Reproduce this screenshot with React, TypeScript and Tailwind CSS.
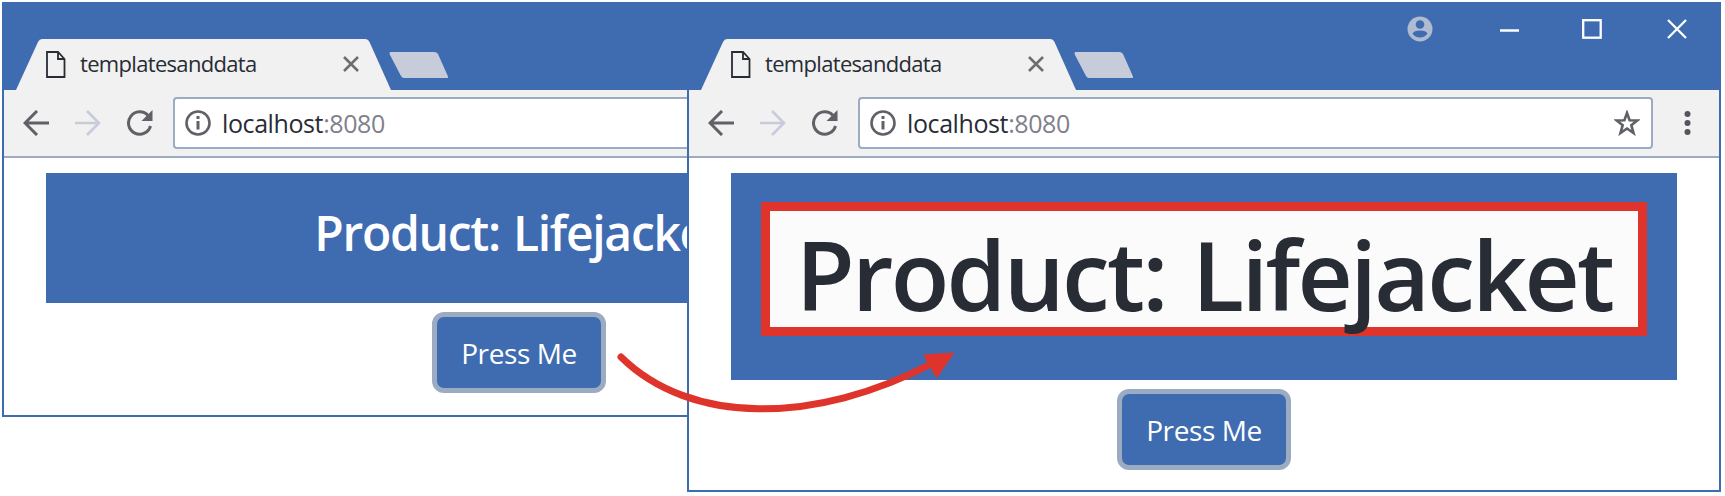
import type { ReactNode } from "react";

const Tab = () => (
  <div className="flex h-[88px] items-end">
    <div className="relative ml-3 h-[51px] w-[378px]">
      <svg className="absolute inset-0 overflow-visible" width="446" height="51" aria-hidden="true">
        <path d="M0 51 L22 3 Q23.500 0 26 0 H349 Q352 0 353.500 3 L375 51 Z" fill="#f1f1f1" />
        <path d="M374 13 H418 Q421 13 422 15 L432 37.500 Q432.500 39 431 39 H388 Q386 39 385 37 L373.500 15 Z" fill="#c6ccda" />
      </svg>
      <div className="relative flex h-full items-center pl-[30px]">
        <svg width="20" height="28" viewBox="0 0 20 28" fill="none" stroke="#282c35" strokeWidth="1.8" aria-hidden="true">
          <path d="M1 1 H12 L18.500 8 V26 H1 Z M12 1 V8 H18.500" />
        </svg>
        <span className="mb-[3px] ml-[14px] w-[190px] whitespace-nowrap text-[22px] leading-none tracking-[-0.68px] text-[#282c35]">
          templatesanddata
        </span>
        <svg className="mb-px ml-[73px]" width="16" height="16" viewBox="0 0 16 16" stroke="#6e6d74" strokeWidth="2.6" aria-hidden="true">
          <path d="M1 1 L15 15 M15 1 L1 15" />
        </svg>
      </div>
    </div>
  </div>
);

const WindowButtons = () => (
  <div className="ml-auto mr-[34px] mt-[11px] flex h-8 items-center" aria-hidden="true">
    <svg width="26" height="26" viewBox="0 0 26 26">
      <circle cx="13" cy="13" r="12.500" fill="#aebbd0" />
      <circle cx="13" cy="8.500" r="4.300" fill="#3f6cb1" />
      <path d="M5.500 17.500 Q7 14.500 13 14.500 Q19 14.500 20.500 17.500 Q18 21.500 13 21.500 Q8 21.500 5.500 17.500 Z" fill="#3f6cb1" />
    </svg>
    <svg className="ml-[66px]" width="22" height="22" stroke="#fff" strokeWidth="2.500">
      <path d="M1 12.500 H20" />
    </svg>
    <svg className="ml-[61px]" width="20" height="20" fill="none" stroke="#fff" strokeWidth="2.300">
      <rect x="1.200" y="1.200" width="17.500" height="17.500" />
    </svg>
    <svg className="ml-[65px]" width="20" height="20" stroke="#fff" strokeWidth="2.300">
      <path d="M1 1 L19 19 M19 1 L1 19" />
    </svg>
  </div>
);

const Toolbar = () => (
  <div className="flex h-[68px] items-start border-b-2 border-[#9babc1] bg-[#f1f1f1] pt-[7px]">
    <div className="flex h-[52px] items-center pl-[19px]">
      <svg width="26" height="26" viewBox="0 0 26 26" fill="none" stroke="#625f66" strokeWidth="3" aria-hidden="true">
        <path d="M26 13 H3 M14 1 L2 13 L14 25" />
      </svg>
      <svg className="ml-[26px]" width="26" height="26" viewBox="0 0 26 26" fill="none" stroke="#c6ccda" strokeWidth="2.600" aria-hidden="true">
        <path d="M0 13 H23 M12 1 L24 13 L12 25" />
      </svg>
      <svg className="ml-[25px]" width="27" height="26" viewBox="0 0 27 26" fill="none" stroke="#625f66" strokeWidth="3" aria-hidden="true">
        <path d="M22 5.500 A11.200 11.200 0 1 0 24.500 16" />
        <path d="M26.500 0 V11 H15.500 Z" fill="#625f66" stroke="none" />
      </svg>
    </div>
    <div className="ml-[20px] flex h-[52px] w-[795px] items-center rounded-[4px] border-2 border-[#9babc1] bg-white pl-[10px] pr-[11px]">
      <svg width="26" height="26" viewBox="0 0 26 26" fill="none" stroke="#625f66" strokeWidth="2.600" aria-hidden="true">
        <circle cx="13" cy="13" r="11.500" />
        <path d="M13 11 V19.500 M13 6 V9" strokeWidth="3" />
      </svg>
      <span className="ml-[11px] whitespace-nowrap text-[25px] leading-none tracking-[-0.4px] text-[#282c35]">
        localhost<span className="text-[#80808c]">:8080</span>
      </span>
      <svg className="ml-auto" width="26" height="26" viewBox="0 0 26 26" fill="none" stroke="#625f66" strokeWidth="2.600" aria-hidden="true">
        <path d="M13 3 L15.600 10.300 L23.300 10.500 L17.300 15.200 L19.500 23 L13 18.500 L6.500 23 L8.700 15.200 L2.700 10.500 L10.400 10.300 Z" />
      </svg>
    </div>
    <svg className="ml-[31px] mt-[13px]" width="7" height="26" fill="#55535b" aria-hidden="true">
      <circle cx="3.500" cy="4" r="3" />
      <circle cx="3.500" cy="13" r="3" />
      <circle cx="3.500" cy="22" r="3" />
    </svg>
  </div>
);

const PressButton = () => (
  <button className="mx-auto mt-[9px] block h-[81px] w-[174px] rounded-[12px] border-[5px] border-[#9babc1] bg-[#3f6cb1] text-[28px] leading-none tracking-[-0.4px] text-white">
    Press Me
  </button>
);

const BrowserWindow = ({ children }: { children: ReactNode }) => (
  <div className="flex h-full w-[1034px] shrink-0 flex-col border-2 border-t-0 border-[#3f6cb1] bg-white">
    <div className="-mr-[2px] flex h-[88px] shrink-0 items-start bg-[#3f6cb1]">
      <Tab />
      <WindowButtons />
    </div>
    <Toolbar />
    <div className="px-[42px] pt-[15px]">{children}</div>
  </div>
);

export default function App() {
  return (
    <div className="relative flex h-[496px] w-[1725px] items-start overflow-hidden bg-white pl-[2px] pt-[2px] font-['Open_Sans',sans-serif]">
      <div className="h-[415px] w-[685px] shrink-0 overflow-hidden">
        <BrowserWindow>
          <h4 className="flex h-[130px] items-center justify-center whitespace-nowrap bg-[#3f6cb1] pb-[10px] text-[48px] font-semibold leading-none tracking-[-1.3px] text-white [word-spacing:2px]">
            Product: Lifejacket
          </h4>
          <PressButton />
        </BrowserWindow>
      </div>
      <div className="h-[490px] shrink-0">
        <BrowserWindow>
          <div className="h-[207px] bg-[#3f6cb1] px-[30px] pt-[29px]">
            <h1 className="flex h-[134px] items-center justify-center whitespace-nowrap border-[9px] border-[#df342b] bg-[#fbfbfb] pt-[9px] text-[96px] font-semibold leading-none tracking-[-2.7px] text-[#282c35] [word-spacing:4px]">
              Product: Lifejacket
            </h1>
          </div>
          <PressButton />
        </BrowserWindow>
      </div>
      <svg className="pointer-events-none absolute left-0 top-0" width="1725" height="496" aria-hidden="true">
        <path d="M621 357 C690 425 815 425 933 363" fill="none" stroke="#df342b" strokeWidth="7" strokeLinecap="round" />
        <path d="M954.500 352.500 L923 354.500 L936.500 378.500 Z" fill="#df342b" />
      </svg>
    </div>
  );
}
